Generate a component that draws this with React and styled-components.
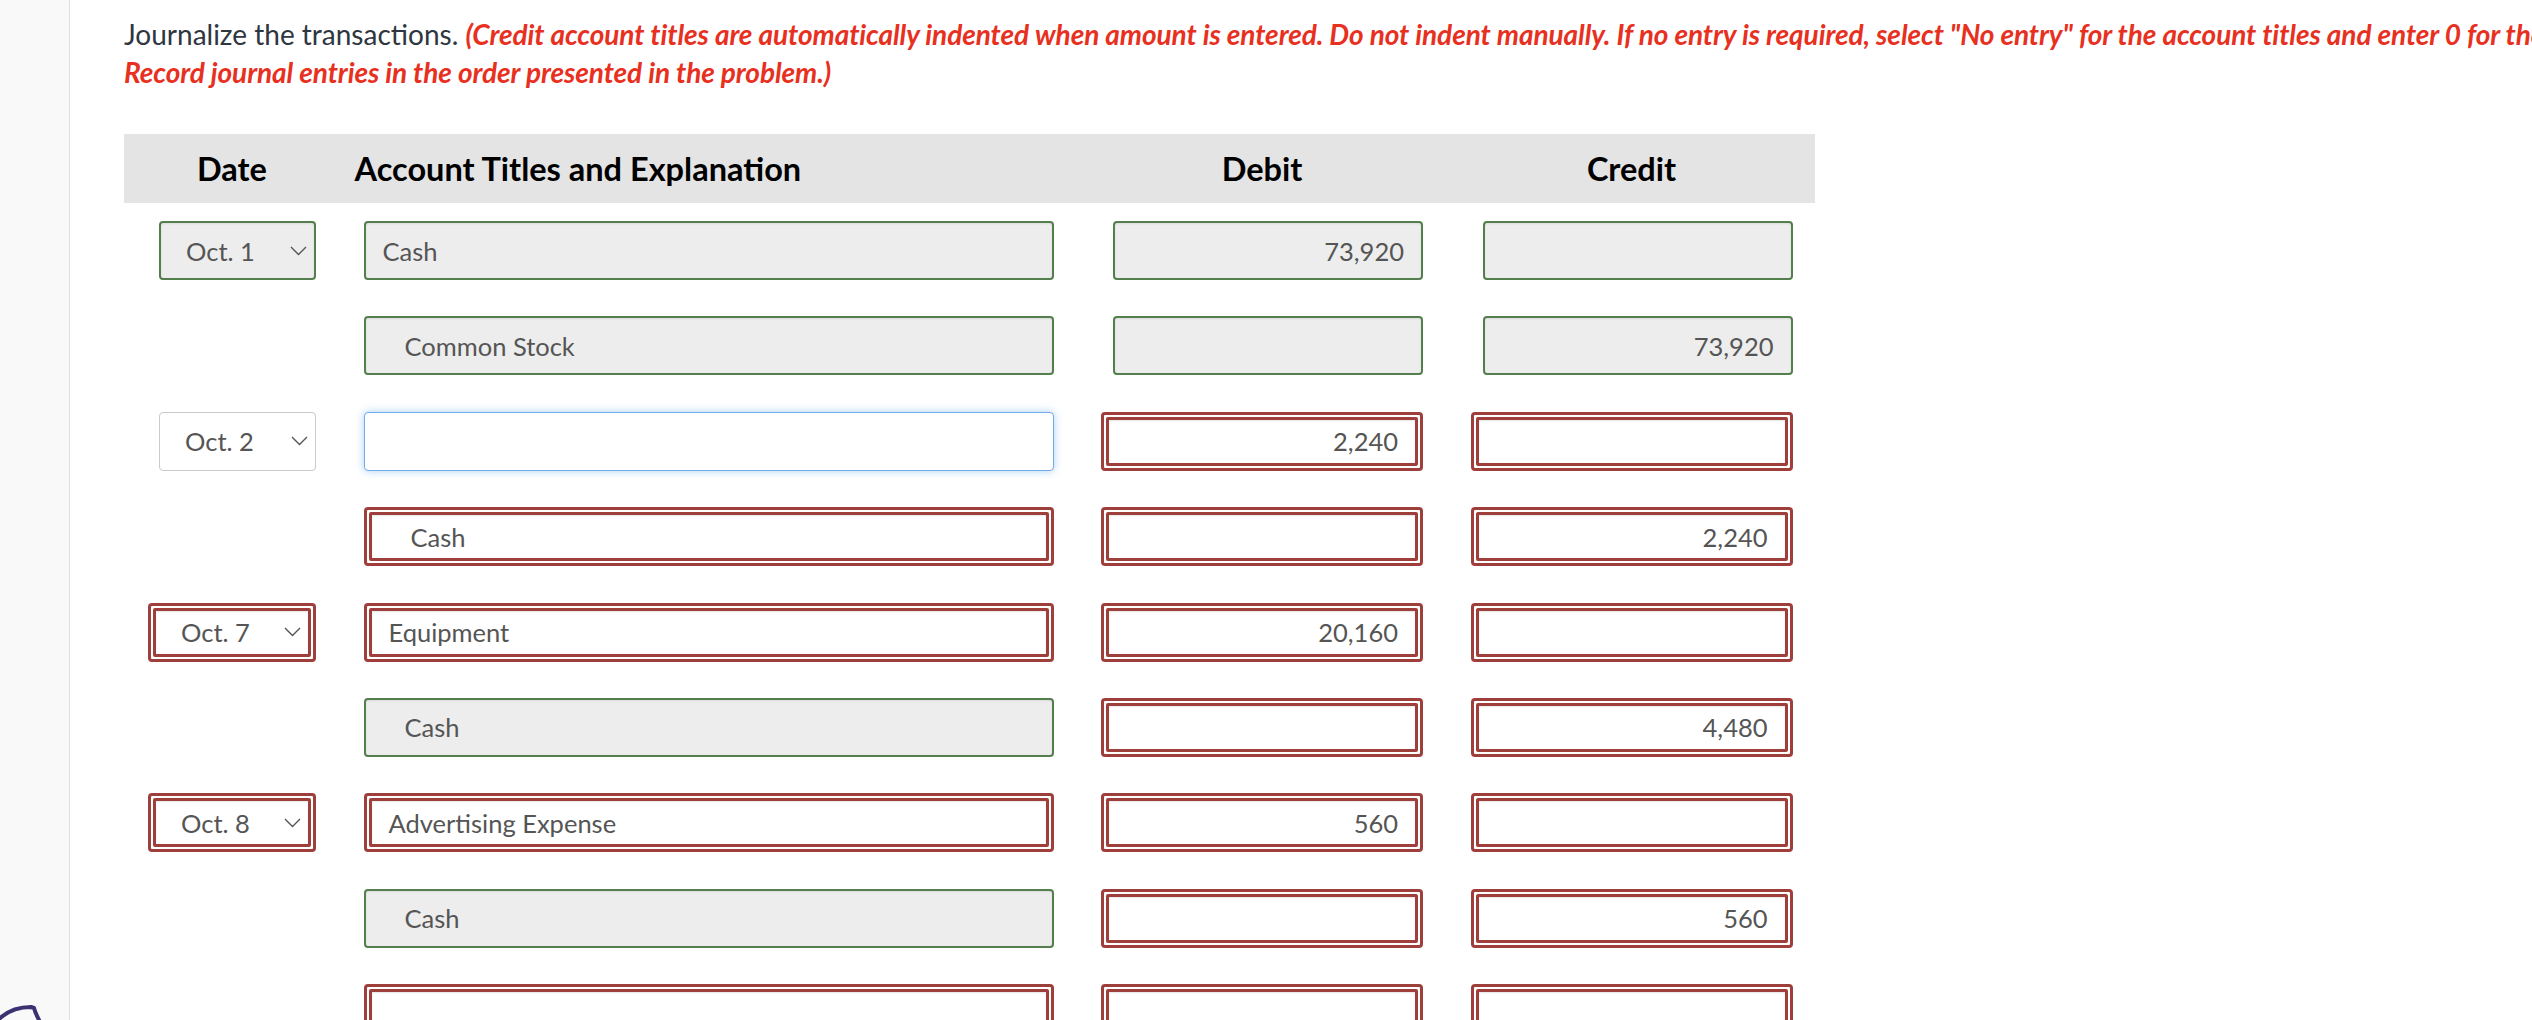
import React from "react";
import styled, { createGlobalStyle, css } from "styled-components";

const GlobalStyle = createGlobalStyle`
  html, body {
    margin: 0;
    padding: 0;
    background: #ffffff;
    overflow: hidden;
  }
  body {
    font-family: Lato, "Open Sans", "Liberation Sans", sans-serif;
  }
  * { box-sizing: border-box; }
`;

const Page = styled.div`
  display: flex;
  width: 2532px;
  height: 1020px;
  overflow: hidden;
`;

const Sidebar = styled.aside`
  position: relative;
  flex: 0 0 70px;
  height: 100%;
  background: #f9f9f9;
  border-right: 1px solid #dedede;
`;

const SideMark = styled.svg`
  position: absolute;
  left: 0;
  bottom: 0;
`;

const Main = styled.main`
  flex: 1;
  min-width: 0;
  padding: 15px 0 0 54px;
`;

const Instructions = styled.p`
  margin: 0;
  font-size: 28px;
  line-height: 38px;
  color: #2f3640;
  white-space: nowrap;
`;

const Warn = styled.em`
  color: #e8301f;
  font-weight: 700;
  font-style: italic;
  letter-spacing: -0.08px;
`;

const cols = css`
  display: grid;
  grid-template-columns: 168px 690px 322px 322px;
  column-gap: 47.5px;
  padding: 0 23px 0 24px;
  width: 1691px;
`;

const HeaderBar = styled.div`
  ${cols};
  margin-top: 43px;
  height: 69px;
  align-items: center;
  background: #e4e4e4;
`;

const HeadCell = styled.div`
  font-weight: 700;
  font-size: 32.5px;
  color: #000;
  white-space: nowrap;
  text-align: ${(p) => (p.$left ? "left" : "center")};
  margin-left: ${(p) => (p.$left ? "-9px" : "0")};
`;

const Body = styled.div`
  display: flex;
  flex-direction: column;
  gap: 36.4px;
  margin-top: 18px;
`;

const Row = styled.div`
  ${cols};
  height: 59px;
`;

const Cell = styled.div`
  display: flex;
  justify-content: flex-end;
  height: 100%;
`;

const RED = "#9f3f3b";

const RedFrame = styled.div`
  width: 100%;
  height: 100%;
  padding: 2px;
  border: 3px solid ${RED};
  border-radius: 4px;
  background: #fff;
`;

const tones = {
  correct: css`
    background: #ededed;
    border: 2px solid #527f4b;
    border-radius: 4px;
    box-shadow: inset 0 1px 2px rgba(0, 0, 0, 0.08);
  `,
  wrong: css`
    background: #fff;
    border: 3px solid ${RED};
    border-radius: 2px;
    box-shadow: inset 0 1px 2px rgba(0, 0, 0, 0.1);
  `,
  active: css`
    background: #fff;
    border: 1.5px solid #72aaea;
    border-radius: 4px;
    box-shadow: 0 0 8px rgba(102, 170, 235, 0.55);
  `,
  plain: css`
    background: #fff;
    border: 1px solid #cacaca;
    border-radius: 4px;
  `,
};

const Field = styled.div`
  position: relative;
  display: flex;
  align-items: center;
  height: 100%;
  width: ${(p) => (p.$narrow ? `calc(100% - ${p.$narrow}px)` : "100%")};
  justify-content: ${(p) => (p.$right ? "flex-end" : "flex-start")};
  padding: ${(p) =>
    p.$select
      ? "0 0 0 25px"
      : p.$right
      ? "0 17px 0 0"
      : `0 0 0 ${17 + (p.$indent ? 22 : 0)}px`};
  font-size: 25.5px;
  color: #555;
  white-space: nowrap;
  ${(p) => tones[p.$tone]};
`;

const Chevron = styled.svg`
  position: absolute;
  right: 7px;
  top: 50%;
  margin-top: -5px;
`;

function Box({ tone, narrow, children, ...rest }) {
  if (tone === "wrong") {
    return (
      <RedFrame>
        <Field $tone="wrong" {...rest}>
          {children}
        </Field>
      </RedFrame>
    );
  }
  return (
    <Field $tone={tone} $narrow={narrow} {...rest}>
      {children}
    </Field>
  );
}

function DateSelect({ d }) {
  if (!d) return <Cell />;
  return (
    <Cell>
      <Box tone={d.v} narrow={11} $select>
        {d.label}
        <Chevron width="17" height="10" viewBox="0 0 17 10">
          <polyline
            points="1,1 8.5,8.5 16,1"
            fill="none"
            stroke="#555"
            strokeWidth="1.4"
          />
        </Chevron>
      </Box>
    </Cell>
  );
}

function Account({ a }) {
  return (
    <Cell>
      <Box tone={a.v} $indent={a.indent}>
        {a.text}
      </Box>
    </Cell>
  );
}

function Amount({ m }) {
  return (
    <Cell>
      <Box tone={m.v} narrow={12} $right>
        {m.text}
      </Box>
    </Cell>
  );
}

const G = "correct";
const R = "wrong";

const rows = [
  {
    date: { label: "Oct. 1", v: G },
    account: { text: "Cash", v: G },
    debit: { text: "73,920", v: G },
    credit: { text: "", v: G },
  },
  {
    account: { text: "Common Stock", v: G, indent: true },
    debit: { text: "", v: G },
    credit: { text: "73,920", v: G },
  },
  {
    date: { label: "Oct. 2", v: "plain" },
    account: { text: "", v: "active" },
    debit: { text: "2,240", v: R },
    credit: { text: "", v: R },
  },
  {
    account: { text: "Cash", v: R, indent: true },
    debit: { text: "", v: R },
    credit: { text: "2,240", v: R },
  },
  {
    date: { label: "Oct. 7", v: R },
    account: { text: "Equipment", v: R },
    debit: { text: "20,160", v: R },
    credit: { text: "", v: R },
  },
  {
    account: { text: "Cash", v: G, indent: true },
    debit: { text: "", v: R },
    credit: { text: "4,480", v: R },
  },
  {
    date: { label: "Oct. 8", v: R },
    account: { text: "Advertising Expense", v: R },
    debit: { text: "560", v: R },
    credit: { text: "", v: R },
  },
  {
    account: { text: "Cash", v: G, indent: true },
    debit: { text: "", v: R },
    credit: { text: "560", v: R },
  },
  {
    account: { text: "", v: R },
    debit: { text: "", v: R },
    credit: { text: "", v: R },
  },
];

export default function App() {
  return (
    <>
      <GlobalStyle />
      <Page>
        <Sidebar>
          <SideMark width="60" height="30" viewBox="0 0 60 30">
            <path
              d="M-2 30 C 6 22, 18 17, 31 17 L 34 18 C 35 22, 37 26, 39 30"
              fill="none"
              stroke="#3b3274"
              strokeWidth="4"
              strokeLinecap="round"
              strokeLinejoin="round"
            />
          </SideMark>
        </Sidebar>
        <Main>
          <Instructions>
            Journalize the transactions.{" "}
            <Warn>
              (Credit account titles are automatically indented when amount is
              entered. Do not indent manually. If no entry is required, select
              "No entry" for the account titles and enter 0 for the amounts.
            </Warn>
            <br />
            <Warn>
              Record journal entries in the order presented in the problem.)
            </Warn>
          </Instructions>
          <HeaderBar>
            <HeadCell>Date</HeadCell>
            <HeadCell $left>Account Titles and Explanation</HeadCell>
            <HeadCell>Debit</HeadCell>
            <HeadCell>Credit</HeadCell>
          </HeaderBar>
          <Body>
            {rows.map((r, i) => (
              <Row key={i}>
                <DateSelect d={r.date} />
                <Account a={r.account} />
                <Amount m={r.debit} />
                <Amount m={r.credit} />
              </Row>
            ))}
          </Body>
        </Main>
      </Page>
    </>
  );
}
